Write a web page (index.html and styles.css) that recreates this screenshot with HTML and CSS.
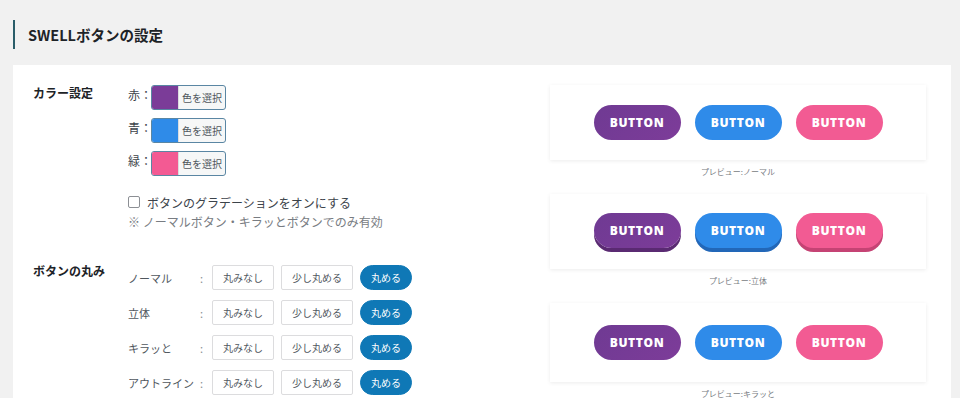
FILE: index.html
```html
<!DOCTYPE html>
<html lang="ja">
<head>
<meta charset="utf-8">
<link rel="stylesheet" href="styles.css">
</head>
<body>
<h1 class="page-title">SWELLボタンの設定</h1>
<div class="panel">
  <div class="settings">
    <div class="section">
      <div class="section-label">カラー設定</div>
      <div class="section-body">
        <div class="color-row">
          <span class="color-label">赤：</span>
          <span class="picker"><span class="swatch sw-purple"></span><span class="picker-text">色を選択</span></span>
        </div>
        <div class="color-row">
          <span class="color-label">青：</span>
          <span class="picker"><span class="swatch sw-blue"></span><span class="picker-text">色を選択</span></span>
        </div>
        <div class="color-row">
          <span class="color-label">緑：</span>
          <span class="picker"><span class="swatch sw-pink"></span><span class="picker-text">色を選択</span></span>
        </div>
        <label class="check-row"><span class="checkbox"></span><span>ボタンのグラデーションをオンにする</span></label>
        <p class="note">※ ノーマルボタン・キラッとボタンでのみ有効</p>
      </div>
    </div>
    <div class="section section-round">
      <div class="section-label">ボタンの丸み</div>
      <div class="section-body">
        <div class="round-row">
          <span class="round-label">ノーマル</span><span class="colon">:</span>
          <span class="opt opt-none">丸みなし</span><span class="opt opt-some">少し丸める</span><span class="opt opt-round">丸める</span>
        </div>
        <div class="round-row">
          <span class="round-label">立体</span><span class="colon">:</span>
          <span class="opt opt-none">丸みなし</span><span class="opt opt-some">少し丸める</span><span class="opt opt-round">丸める</span>
        </div>
        <div class="round-row">
          <span class="round-label">キラッと</span><span class="colon">:</span>
          <span class="opt opt-none">丸みなし</span><span class="opt opt-some">少し丸める</span><span class="opt opt-round">丸める</span>
        </div>
        <div class="round-row">
          <span class="round-label">アウトライン</span><span class="colon">:</span>
          <span class="opt opt-none">丸みなし</span><span class="opt opt-some">少し丸める</span><span class="opt opt-round">丸める</span>
        </div>
      </div>
    </div>
  </div>
  <div class="previews">
    <div class="preview">
      <div class="card">
        <span class="btn b-purple">BUTTON</span><span class="btn b-blue">BUTTON</span><span class="btn b-pink">BUTTON</span>
      </div>
      <div class="caption">プレビュー:ノーマル</div>
    </div>
    <div class="preview">
      <div class="card">
        <span class="btn solid b-purple">BUTTON</span><span class="btn solid b-blue">BUTTON</span><span class="btn solid b-pink">BUTTON</span>
      </div>
      <div class="caption">プレビュー:立体</div>
    </div>
    <div class="preview">
      <div class="card card-tall">
        <span class="btn b-purple">BUTTON</span><span class="btn b-blue">BUTTON</span><span class="btn b-pink">BUTTON</span>
      </div>
      <div class="caption">プレビュー:キラッと</div>
    </div>
  </div>
</div>
</body>
</html>
```
FILE: styles.css
```css
* { box-sizing: border-box; }
html, body { margin: 0; padding: 0; }
body {
  width: 960px;
  height: 398px;
  overflow: hidden;
  background: #f1f1f1;
  font-family: "Noto Sans CJK JP", "Noto Sans", sans-serif;
  color: #3c434a;
}
.page-title {
  margin: 20px 0 0 13px;
  height: 29px;
  border-left: 2px solid #2a5d69;
  padding-left: 13px;
  font-size: 14.5px;
  font-weight: 700;
  line-height: 29px;
  color: #1d2327;
}
.panel {
  margin: 16px 0 0 13px;
  width: 938px;
  height: 340px;
  background: #fff;
  display: flex;
  padding-top: 20px;
}
.settings {
  width: 537px;
  padding-left: 20px;
}
.section { display: flex; }
.section-label {
  width: 95px;
  font-size: 12px;
  font-weight: 700;
  color: #1d2327;
  line-height: 16px;
}
.section-body { display: flex; flex-direction: column; }
.color-row {
  display: flex;
  align-items: center;
  height: 25px;
  margin-bottom: 8px;
}
.color-label {
  width: 23px;
  font-size: 12px;
  color: #3c434a;
  margin-top: -6px;
}
.picker {
  display: flex;
  width: 75px;
  height: 25px;
  border: 1px solid #5a86a3;
  border-radius: 3px;
  overflow: hidden;
  background: #f6f7f7;
}
.swatch { width: 26px; height: 100%; }
.sw-purple { background: #7b3c98; }
.sw-blue { background: #2f8be8; }
.sw-pink { background: #f35a93; }
.picker-text {
  flex: 1;
  border-left: 1px solid #dcdcde;
  font-size: 10px;
  line-height: 23px;
  text-align: center;
  color: #50575e;
}
.check-row {
  display: flex;
  align-items: center;
  margin-top: 10px;
  height: 16px;
  font-size: 12px;
  color: #3c434a;
}
.checkbox {
  width: 12px;
  height: 12px;
  border: 1px solid #8c8f94;
  border-radius: 2px;
  margin-right: 7px;
  background: #fff;
}
.note {
  margin: 4px 0 0;
  font-size: 12px;
  line-height: 16px;
  color: #787c82;
}
.section-round { margin-top: 35px; }
.section-round .section-label { margin-top: -2px; }
.round-row {
  display: flex;
  align-items: center;
  height: 25px;
  margin-bottom: 10px;
}
.round-label {
  width: 72px;
  font-size: 11px;
  color: #50575e;
}
.colon {
  width: 12px;
  font-size: 11px;
  color: #8c8f94;
}
.opt {
  height: 25px;
  font-size: 10px;
  line-height: 23px;
  text-align: center;
  border: 1px solid #dcdcde;
  border-radius: 2px;
  color: #50575e;
  background: #fff;
  margin-right: 7px;
}
.opt-none { width: 62px; }
.opt-some { width: 72px; }
.opt-round {
  width: 52px;
  border-color: #0f78b6;
  background: #0f78b6;
  color: #fff;
  border-radius: 13px;
}
.previews {
  width: 376px;
  display: flex;
  flex-direction: column;
}
.preview { margin-bottom: 16px; }
.card {
  height: 75px;
  background: #fff;
  box-shadow: 0 1px 4px rgba(0, 0, 0, 0.08);
  display: flex;
  align-items: center;
  justify-content: center;
}
.card-tall { height: 79px; }
.btn {
  width: 87px;
  height: 35px;
  margin: 0 7px;
  border-radius: 18px;
  color: #fff;
  font-family: "Open Sans", Lato, sans-serif;
  font-weight: 800;
  font-size: 12px;
  letter-spacing: 0.6px;
  display: flex;
  align-items: center;
  justify-content: center;
}
.b-purple { background: linear-gradient(135deg, #6f3a93, #7d3c99); }
.b-blue { background: #2f8be9; }
.b-pink { background: #f25b93; }
.solid { margin-top: -3px; }
.solid.b-purple { box-shadow: 0 4px 0 #5a2a72; }
.solid.b-blue { box-shadow: 0 4px 0 #2267b8; }
.solid.b-pink { box-shadow: 0 4px 0 #c54374; }
.caption {
  margin-top: 6px;
  height: 12px;
  font-size: 8px;
  line-height: 12px;
  text-align: center;
  color: #787c82;
}
```
